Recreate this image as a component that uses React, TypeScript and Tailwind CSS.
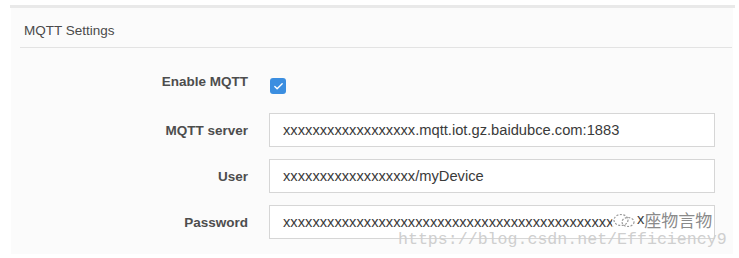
import { Check } from 'lucide-react';

const rows = [
  { label: 'MQTT server', value: 'xxxxxxxxxxxxxxxxxx.mqtt.iot.gz.baidubce.com:1883' },
  { label: 'User', value: 'xxxxxxxxxxxxxxxxxx/myDevice' },
  { label: 'Password', value: 'xxxxxxxxxxxxxxxxxxxxxxxxxxxxxxxxxxxxxxxxxxxxx' },
];

export default function App() {
  return (
    <div className="relative w-[739px] h-[258px] overflow-hidden bg-white font-['Liberation_Sans',Arial,sans-serif]">
      <div className="ml-[10px] mr-[4px] mt-[5px] h-[3px] bg-[#e9e9e9]" />
      <div className="ml-[11px] mr-[6px] h-[246px] bg-[#fbfbfb]">
        <div className="h-[39px] flex items-center pl-[13px] pt-[7px] text-[13.5px] text-[#4a4a4a]">
          MQTT Settings
        </div>
        <div className="ml-[9px] mr-[1px] h-px bg-[#e3e3e3]" />

        <div className="flex mt-[26px] h-[16px]">
          <div className="w-[237px] text-right text-[13.5px] font-bold leading-[16px] text-[#4d4d4d]">Enable MQTT</div>
          <div className="ml-[22px] mt-[4px] w-[16px] h-[16px] rounded-[3px] bg-[#3b8ee0] flex items-center justify-center">
            <Check className="w-[11px] h-[11px] text-white" strokeWidth={3} />
          </div>
        </div>

        <div className="flex flex-col gap-[12px] mt-[23px]">
          {rows.map((r) => (
            <div key={r.label} className="flex items-center h-[34px]">
              <div className="w-[237px] pt-[2px] text-right text-[13.5px] font-bold text-[#4d4d4d]">{r.label}</div>
              <div className="ml-[21px] w-[446px] h-[34px] border border-[#d6d6d6] bg-white flex items-center pl-[13px] overflow-hidden whitespace-nowrap text-[14.7px] text-[#3a3a3a]">
                {r.value}
              </div>
            </div>
          ))}
        </div>
      </div>

      {/* watermarks */}
      <div className="absolute left-[612px] top-[211px] flex items-center">
        <svg width="24" height="16" viewBox="0 0 24 16" className="bg-white/70">
          <ellipse cx="9" cy="8" rx="7" ry="5.5" fill="none" stroke="#9a9a9a" strokeWidth="1.2" strokeDasharray="2 1.5" />
          <ellipse cx="16" cy="10" rx="6" ry="4.5" fill="none" stroke="#9a9a9a" strokeWidth="1.2" strokeDasharray="2 1.5" />
        </svg>
        <span className="ml-[1px] text-[14.7px] leading-[17px] text-[#3a3a3a]">x</span>
        <span className="text-[17px] leading-[17px] text-[#8a8a8a] font-['Noto_Sans_CJK_SC',sans-serif]">座物言物</span>
      </div>
      <div className="absolute left-[398px] top-[231px] text-[16.6px] leading-[18px] text-[#cfcfcf] font-['Liberation_Mono',monospace] whitespace-nowrap">
        https://blog.csdn.net/Efficiency9
      </div>
    </div>
  );
}
